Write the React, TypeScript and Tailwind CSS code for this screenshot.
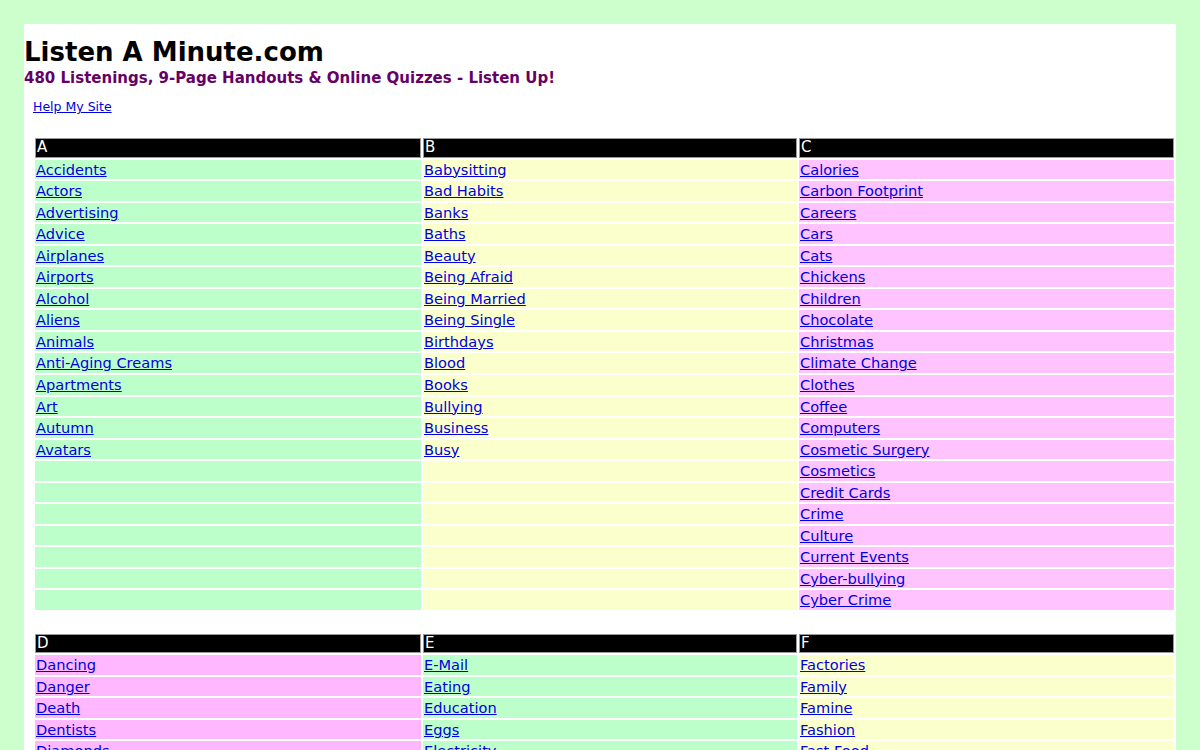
import React from "react";

type Col = { letter: string; bg: string; items: string[] };

const rowsA: Col[] = [
  {
    letter: "A",
    bg: "bg-[#bdffcb]",
    items: [
      "Accidents", "Actors", "Advertising", "Advice", "Airplanes", "Airports", "Alcohol",
      "Aliens", "Animals", "Anti-Aging Creams", "Apartments", "Art", "Autumn", "Avatars",
    ],
  },
  {
    letter: "B",
    bg: "bg-[#fbffcc]",
    items: [
      "Babysitting", "Bad Habits", "Banks", "Baths", "Beauty", "Being Afraid", "Being Married",
      "Being Single", "Birthdays", "Blood", "Books", "Bullying", "Business", "Busy",
    ],
  },
  {
    letter: "C",
    bg: "bg-[#ffc4ff]",
    items: [
      "Calories", "Carbon Footprint", "Careers", "Cars", "Cats", "Chickens", "Children",
      "Chocolate", "Christmas", "Climate Change", "Clothes", "Coffee", "Computers",
      "Cosmetic Surgery", "Cosmetics", "Credit Cards", "Crime", "Culture", "Current Events",
      "Cyber-bullying", "Cyber Crime",
    ],
  },
];

const rowsD: Col[] = [
  {
    letter: "D",
    bg: "bg-[#ffb8ff]",
    items: [
      "Dancing", "Danger", "Death", "Dentists", "Diamonds", "Diets", "Dinosaurs", "Divorce",
      "Doctors", "Dogs", "Dreams", "Driving", "Drugs",
    ],
  },
  {
    letter: "E",
    bg: "bg-[#bdffcb]",
    items: ["E-Mail", "Eating", "Education", "Eggs", "Electricity", "Energy", "Environment", "Exams", "Exercise"],
  },
  {
    letter: "F",
    bg: "bg-[#fbffcc]",
    items: [
      "Factories", "Family", "Famine", "Fashion", "Fast Food", "Fear", "Film", "Fire", "Fishing",
      "Flying", "Food", "Football", "Friends", "Fruit",
    ],
  },
];

function LetterTable({ cols }: { cols: Col[] }) {
  const n = Math.max(...cols.map((c) => c.items.length));
  const cells: React.ReactNode[] = [];
  cols.forEach((c) =>
    cells.push(
      <div
        key={"h" + c.letter}
        className="h-[19.55px] bg-black text-white text-[15px] border border-[#9a9a9a] pl-[1px] leading-[17px]"
      >
        {c.letter}
      </div>
    )
  );
  for (let i = 0; i < n; i++) {
    cols.forEach((c) => {
      const item = c.items[i];
      cells.push(
        <div key={c.letter + i} className={`h-[19.55px] ${c.bg} pl-[1px] leading-[19.5px]`}>
          {item ? (
            <a href="#" className="text-[#0000dd] underline">
              {item}
            </a>
          ) : null}
        </div>
      );
    });
  }
  return (
    <div className="ml-[9px] grid grid-cols-[386px_374px_375px] gap-[2px] p-[2px] text-[14.6px]">
      {cells}
    </div>
  );
}

export default function App() {
  return (
    <div className="min-h-screen bg-[#ccffcc] p-[24px] font-['DejaVu_Sans',sans-serif]">
      <div className="w-[1152px] bg-white pt-[13px] pb-[20px]">
        <h1 className="text-[26px] font-bold leading-[30px] text-black">Listen A Minute.com</h1>
        <h2 className="mt-[2px] text-[15px] font-bold leading-[18px] text-[#660066]">
          480 Listenings, 9-Page Handouts &amp; Online Quizzes - Listen Up!
        </h2>
        <div className="ml-[9px] mt-[12px] text-[12.5px] leading-[15px]">
          <a href="#" className="text-[#0000dd] underline">
            Help My Site
          </a>
        </div>
        <div className="mt-[22px]">
          <LetterTable cols={rowsA} />
        </div>
        <div className="mt-[19.5px]">
          <LetterTable cols={rowsD} />
        </div>
      </div>
    </div>
  );
}
